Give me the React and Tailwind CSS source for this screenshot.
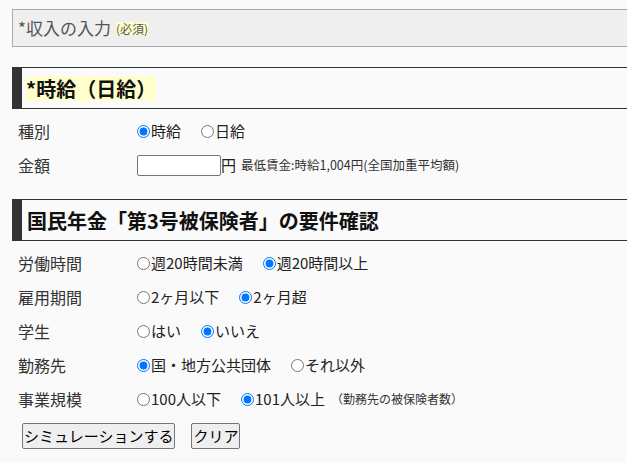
import React from "react";

const font = { fontFamily: '"Noto Sans CJK JP", "Noto Sans", sans-serif' };

function Radio({ name, checked, label }) {
  return (
    <label className="flex items-center">
      <input
        type="radio"
        name={name}
        defaultChecked={checked}
        className="m-0 mr-px w-[13px] h-[13px]"
      />
      <span>{label}</span>
    </label>
  );
}

function Row({ label, children }) {
  return (
    <div className="flex items-center h-[34px]">
      <div className="w-[125px] pl-[6px] text-[16px] text-[#333]">{label}</div>
      <div className="flex items-center text-[15px] text-[#222]">{children}</div>
    </div>
  );
}

function Heading({ children, yellow }) {
  return (
    <div className="flex h-[42px] border-y border-[#333]">
      <div className="w-[10px] bg-[#333]" />
      <div className="flex items-center pl-[4px]">
        <span
          className={
            "text-[20px] font-bold leading-[25px] text-[#111] " +
            (yellow ? "bg-[#ffffcc]" : "pl-px")
          }
        >
          {children}
        </span>
      </div>
    </div>
  );
}

export default function App() {
  return (
    <div className="min-h-[463px] bg-[#fafafa] pl-[12px] pt-[9px] overflow-hidden" style={font}>
      <div className="flex items-center h-[38px] bg-[#efefef] border-l border-y border-[#aaa] pl-[5px]">
        <span className="text-[17px] text-[#555]">*収入の入力</span>
        <span className="ml-[5px] text-[12px] leading-[13px] text-[#555] bg-[#ffffcc]">(必須)</span>
      </div>

      <div className="mt-[20px]">
        <Heading yellow>*時給（日給）</Heading>
      </div>

      <div className="mt-[5px]">
        <Row label="種別">
          <div className="flex items-center gap-5">
            <Radio name="type" checked label="時給" />
            <Radio name="type" label="日給" />
          </div>
        </Row>
        <Row label="金額">
          <input
            type="text"
            className="w-[84px] h-[21px] border border-[#767676] rounded-[2px] bg-white px-1 text-[13px]"
          />
          <span>円</span>
          <span className="ml-[5px] text-[12.5px] text-[#333]">最低賃金:時給1,004円(全国加重平均額)</span>
        </Row>
      </div>

      <div className="mt-[17px]">
        <Heading>国民年金「第3号被保険者」の要件確認</Heading>
      </div>

      <div className="mt-[5px]">
        <Row label="労働時間">
          <div className="flex items-center gap-5">
            <Radio name="hours" label="週20時間未満" />
            <Radio name="hours" checked label="週20時間以上" />
          </div>
        </Row>
        <Row label="雇用期間">
          <div className="flex items-center gap-5">
            <Radio name="period" label="2ヶ月以下" />
            <Radio name="period" checked label="2ヶ月超" />
          </div>
        </Row>
        <Row label="学生">
          <div className="flex items-center gap-5">
            <Radio name="student" label="はい" />
            <Radio name="student" checked label="いいえ" />
          </div>
        </Row>
        <Row label="勤務先">
          <div className="flex items-center gap-5">
            <Radio name="work" checked label="国・地方公共団体" />
            <Radio name="work" label="それ以外" />
          </div>
        </Row>
        <Row label="事業規模">
          <div className="flex items-center gap-5">
            <Radio name="size" label="100人以下" />
            <Radio name="size" checked label="101人以上" />
          </div>
          <span className="ml-[6px] text-[12px] text-[#333]">（勤務先の被保険者数）</span>
        </Row>
      </div>

      <div className="flex items-center gap-4 mt-[7px] pl-[10px]">
        <button className="h-[26px] px-px text-[15px] text-black bg-[#efefef] border border-[#767676] rounded-[2px] leading-[22px]">
          シミュレーションする
        </button>
        <button className="h-[26px] px-px text-[15px] text-black bg-[#efefef] border border-[#767676] rounded-[2px] leading-[22px]">
          クリア
        </button>
      </div>
    </div>
  );
}
